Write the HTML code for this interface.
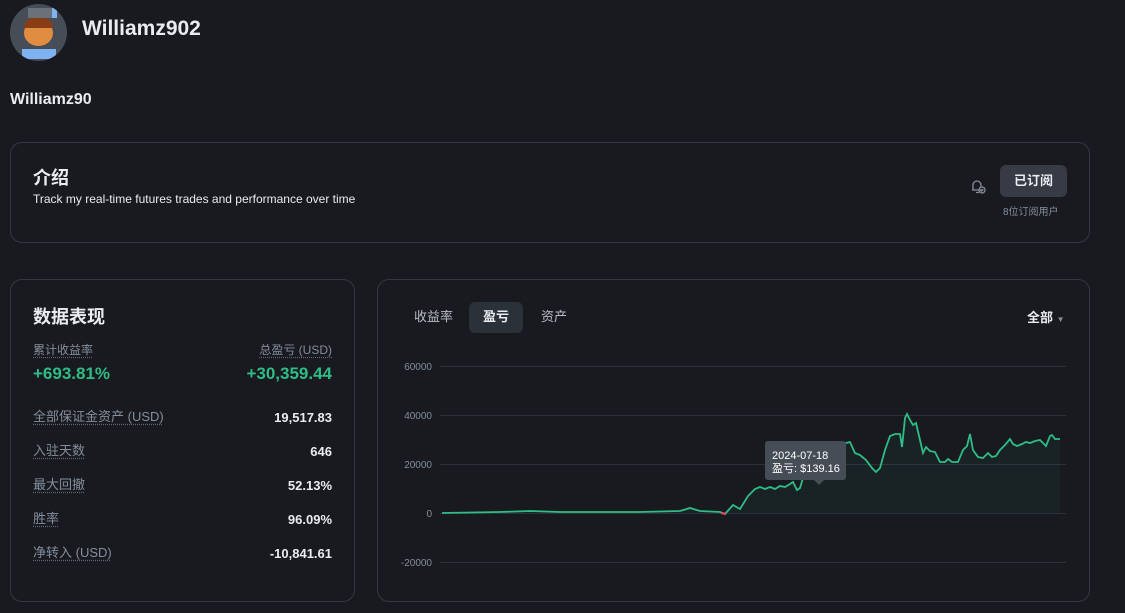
<!DOCTYPE html>
<html><head><meta charset="utf-8"><style>
*{box-sizing:border-box;margin:0;padding:0}
body{width:1125px;height:613px;background:#181a20;color:#eaecef;font-family:"Liberation Sans","Noto Sans CJK SC",sans-serif;position:relative;overflow:hidden}
.a{position:absolute}
.card{position:absolute;border:1px solid #333842;border-radius:12px}
.lbl{color:#848e9c;font-size:13px;text-decoration:underline dotted #5e6673;text-underline-offset:3px}
.val{font-size:13px;font-weight:bold;color:#eaecef;text-align:right;right:22px}
</style></head><body>
<div class="a" style="left:10px;top:4px;width:57px;height:57px;border-radius:50%;background:#474d57;overflow:hidden">
 <div class="a" style="left:18px;top:4px;width:24px;height:10px;background:#6b717b"></div>
 <div class="a" style="left:42px;top:4px;width:5px;height:10px;background:#7fb2f0"></div>
 <div class="a" style="left:14px;top:16px;width:29px;height:26px;border-radius:50%;background:#e08d42"></div>
 <div class="a" style="left:14px;top:14px;width:29px;height:10px;border-radius:14px 14px 0 0;background:#8a3d14"></div>
 <div class="a" style="left:12px;top:45px;width:34px;height:10px;background:#7fb2f0"></div>
</div>
<div class="a" style="left:82px;top:17px;font-size:21px;font-weight:bold">Williamz902</div>
<div class="a" style="left:10px;top:91px;font-size:16px;font-weight:bold">Williamz90</div>

<div class="card" style="left:10px;top:142px;width:1080px;height:101px">
 <div class="a" style="left:22px;top:21px;font-size:18px;font-weight:bold">介绍</div>
 <div class="a" style="left:22px;top:49px;font-size:12px">Track my real-time futures trades and performance over time</div>
 <svg class="a" style="left:957px;top:33px" width="20" height="20" viewBox="0 0 20 20" fill="none" stroke="#848e9c" stroke-width="1.3"><path d="M4 14h10M5 14V9a4 4 0 0 1 8 0v2M8 16.5h3"/><circle cx="14" cy="14" r="3"/><path d="M12.6 14l1 1 1.6-1.8"/></svg>
 <div class="a" style="left:989px;top:22px;width:67px;height:32px;border-radius:6px;background:#363b45;color:#eaecef;font-size:13px;font-weight:bold;text-align:center;line-height:32px">已订阅</div>
 <div class="a" style="left:992px;top:60px;font-size:10px;color:#848e9c">8位订阅用户</div>
</div>

<div class="card" style="left:10px;top:279px;width:345px;height:323px">
 <div class="a" style="left:22px;top:23px;font-size:18px;font-weight:bold">数据表现</div>
 <div class="a lbl" style="left:22px;top:61px;font-size:12px">累计收益率</div>
 <div class="a lbl" style="right:22px;top:61px;font-size:12px">总盈亏 (USD)</div>
 <div class="a" style="left:22px;top:84px;font-size:17px;font-weight:bold;color:#2ebd85">+693.81%</div>
 <div class="a" style="right:22px;top:84px;font-size:17px;font-weight:bold;color:#2ebd85">+30,359.44</div>
 <div class="a lbl" style="left:22px;top:126px">全部保证金资产 (USD)</div><div class="a val" style="top:130px">19,517.83</div>
 <div class="a lbl" style="left:22px;top:160px">入驻天数</div><div class="a val" style="top:164px">646</div>
 <div class="a lbl" style="left:22px;top:194px">最大回撤</div><div class="a val" style="top:198px">52.13%</div>
 <div class="a lbl" style="left:22px;top:228px">胜率</div><div class="a val" style="top:232px">96.09%</div>
 <div class="a lbl" style="left:22px;top:262px">净转入 (USD)</div><div class="a val" style="top:266px">-10,841.61</div>
</div>

<div class="card" style="left:377px;top:279px;width:713px;height:323px"></div>
<div class="a" style="left:414px;top:306px;font-size:13px;color:#b7bdc6">收益率</div>
<div class="a" style="left:469px;top:302px;width:54px;height:31px;border-radius:6px;background:#2b3139;font-size:13px;font-weight:bold;text-align:center;line-height:29px">盈亏</div>
<div class="a" style="left:541px;top:306px;font-size:13px;color:#b7bdc6">资产</div>
<div class="a" style="left:1027px;top:307px;font-size:13px;font-weight:bold">全部 <span style="font-size:8px;color:#848e9c">▼</span></div>

<svg class="a" style="left:0;top:0" width="1125" height="613">
 <g stroke="#2b3139" stroke-width="1">
  <line x1="440" y1="366.5" x2="1066" y2="366.5"/><line x1="440" y1="415.5" x2="1066" y2="415.5"/>
  <line x1="440" y1="464.5" x2="1066" y2="464.5"/><line x1="440" y1="513.5" x2="1066" y2="513.5"/>
  <line x1="440" y1="562.5" x2="1066" y2="562.5"/>
 </g>
 <g fill="#848e9c" font-size="10" text-anchor="end" font-family="Liberation Sans">
  <text x="432" y="370">60000</text><text x="432" y="419">40000</text><text x="432" y="468">20000</text><text x="432" y="517">0</text><text x="432" y="566">-20000</text>
 </g>
 <path d="M442,513 L500,512 530,511 560,512 600,512 640,512 680,511 690,508 700,511 720,512 725,514 733,505 740,509 748,496 755,489 760,487 765,489 770,487 775,489 780,486 785,487 790,484 793,482 797,490 800,488 803,478 806,473 812,466 820,458 830,450 846,443 850,442 855,453 860,455 866,460 872,468 876,472 880,468 885,450 890,436 895,434 900,434 902,447 905,418 907,414 910,420 913,425 916,423 920,440 923,453 926,447 930,451 935,452 940,462 945,462 948,459 952,462 958,462 963,450 967,446 970,434 973,450 978,457 983,458 988,453 992,457 996,456 1000,450 1005,445 1010,439 1013,444 1017,446 1022,444 1026,442 1030,443 1035,441 1040,440 1046,446 1050,436 1052,435 1055,439 1060,439 L1060,513 Z" fill="#2ebd85" fill-opacity="0.06"/>
 <path d="M442,513 L500,512 530,511 560,512 600,512 640,512 680,511 690,508 700,511 720,512 725,514 733,505 740,509 748,496 755,489 760,487 765,489 770,487 775,489 780,486 785,487 790,484 793,482 797,490 800,488 803,478 806,473 812,466 820,458 830,450 846,443 850,442 855,453 860,455 866,460 872,468 876,472 880,468 885,450 890,436 895,434 900,434 902,447 905,418 907,414 910,420 913,425 916,423 920,440 923,453 926,447 930,451 935,452 940,462 945,462 948,459 952,462 958,462 963,450 967,446 970,434 973,450 978,457 983,458 988,453 992,457 996,456 1000,450 1005,445 1010,439 1013,444 1017,446 1022,444 1026,442 1030,443 1035,441 1040,440 1046,446 1050,436 1052,435 1055,439 1060,439" fill="none" stroke="#2ebd85" stroke-width="1.8"/>
 <path d="M721,513 L726,514" stroke="#f6465d" stroke-width="2"/>
 <rect x="765" y="441" width="81" height="39" rx="3" fill="#474d57"/>
 <path d="M814,480 L819,485 824,480Z" fill="#474d57"/>
 <text x="772" y="459" fill="#fff" font-size="11" font-family="Liberation Sans">2024-07-18</text>
 <text x="772" y="472" fill="#fff" font-size="11" font-family="Liberation Sans,Noto Sans CJK SC">盈亏: $139.16</text>
</svg>
</body></html>
